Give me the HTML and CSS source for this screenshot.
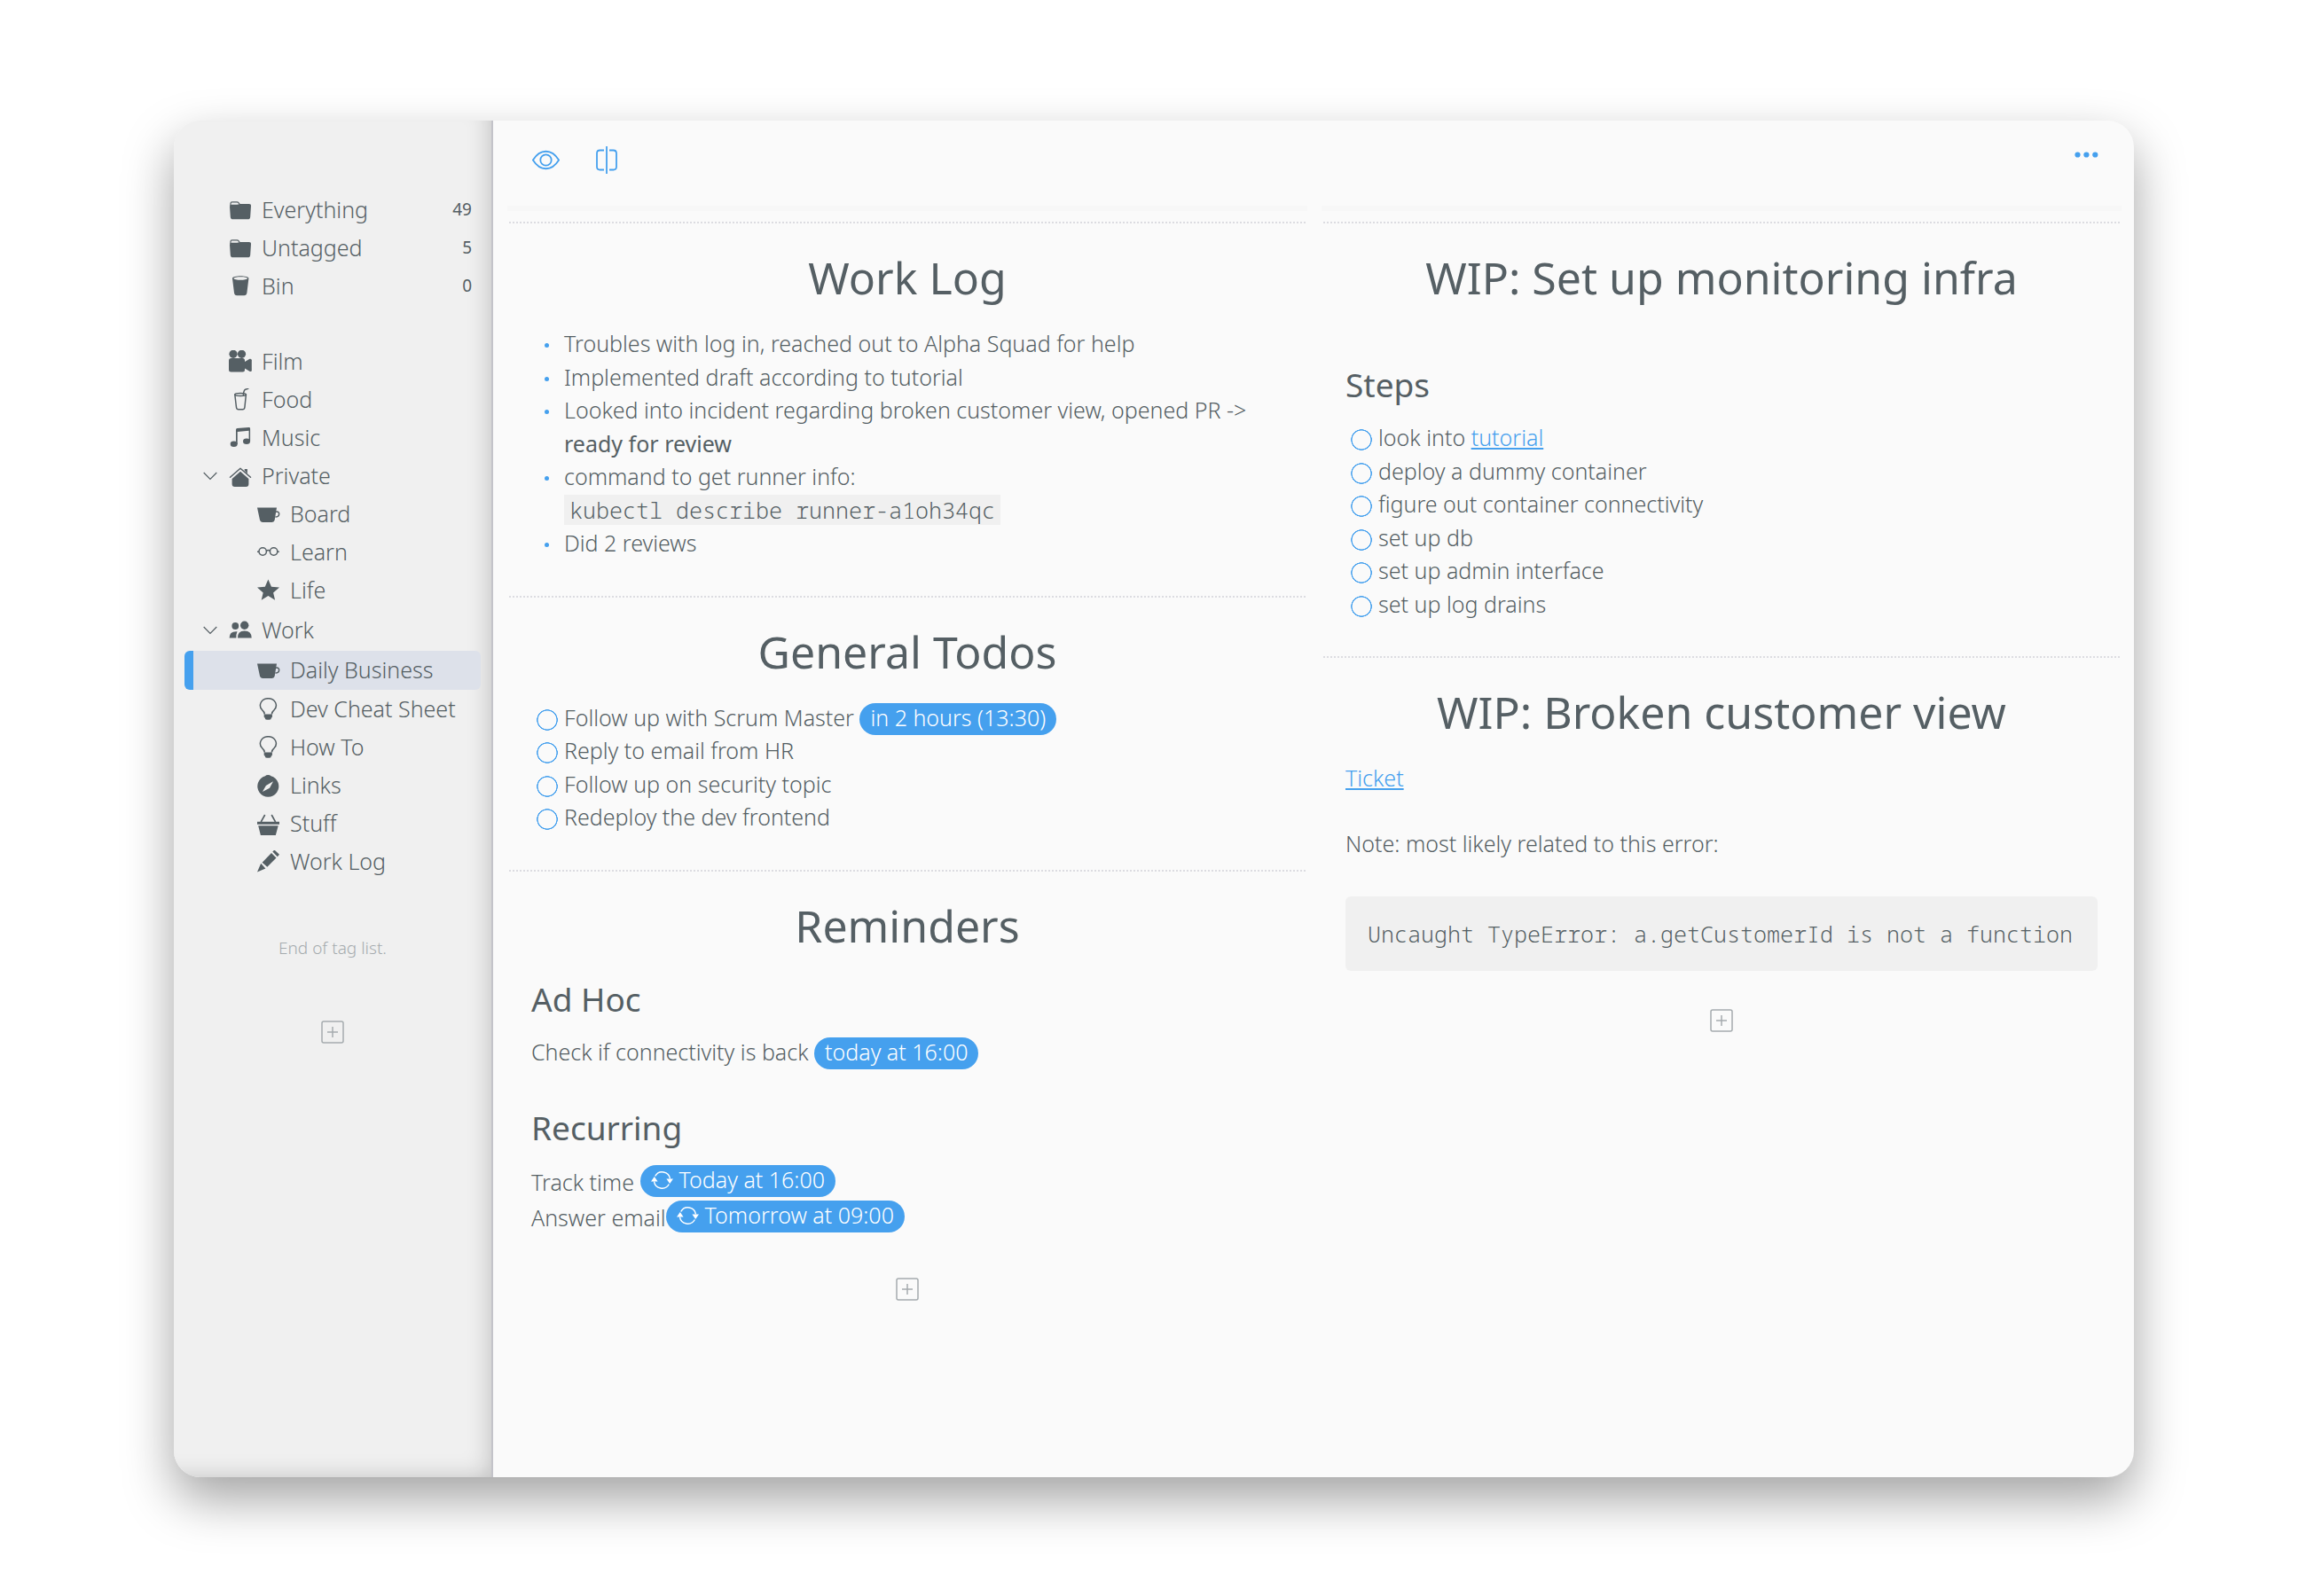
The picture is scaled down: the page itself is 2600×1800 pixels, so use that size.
FILE: index.html
```
<!DOCTYPE html>
<html lang="en">
<head>
<meta charset="utf-8">
<meta name="viewport" content="width=device-width, initial-scale=1">
<title>Daily Business</title>
<link rel="stylesheet" href="styles.css">
</head>
<body>
<svg class="sprite" aria-hidden="true">
  <symbol id="folder" viewBox="0 0 26 26"><path d="M2 8V5.500q0-1.700 1.700-1.700h5.600q1 0 1.600.8l1.200 1.600" fill="none" stroke="currentColor" stroke-width="1.200"/><path d="M1 9q0-2.200 2.200-2.200h6.300L12.500 6h10.300q2.400 0 2.200 2.400l-.8 12q-.2 2.900-2.800 2.900H4.800q-2.800 0-3-2.900z"/></symbol>
  <symbol id="bin" viewBox="0 0 26 26"><path fill-rule="evenodd" d="M4 4C4 .4 22.400.4 22.400 4l-2 16.200q-.4 3-3.200 3H9.200q-2.800 0-3.200-3zM5.500 4c0 2.400 15.400 2.400 15.400 0s-15.400-2-15.400 0z"/></symbol>
  <symbol id="film" viewBox="0 0 26 26"><circle cx="5" cy="4.300" r="4.600"/><circle cx="14.500" cy="4.300" r="4.600"/><rect y="9" width="18" height="15.500" rx="2.500"/><path d="M18 13l5.500-3.200q2.300-.6 2.300 1.400v11.500q0 1.700-2 1.200L18 20.500z"/></symbol>
  <symbol id="food" viewBox="0 0 26 26"><g fill="none" stroke="currentColor" stroke-width="1.500" stroke-linecap="round" stroke-linejoin="round"><path d="M6.800 7l1.700 14.500q.3 2.300 2.300 2.300h4.800q2 0 2.300-2.300L19.400 7"/><ellipse cx="13.100" cy="7" rx="6.300" ry="1.500"/><path d="M16.400 7.500q.3-5.500 2.300-6.200l3-1"/></g></symbol>
  <symbol id="music" viewBox="0 0 26 26"><ellipse cx="5.700" cy="19.700" rx="4" ry="3.300"/><ellipse cx="20" cy="16.800" rx="4" ry="3.200"/><path d="M8 3.800q0-1.500 1.500-1.700L22.500 1q1.600-.2 1.600 1.400V17h-1.500V4.800L9.700 6v14H8z"/></symbol>
  <symbol id="house" viewBox="0 0 26 26"><path d="M1.500 14.300L13 4.200l11.500 10.100" fill="none" stroke="currentColor" stroke-width="1.500" stroke-linecap="round" stroke-linejoin="round"/><path d="M17.700 6.500V5h3.200v5.500z"/><path d="M13 7.800l9.400 8.200v6q0 3-3 3H6.600q-3 0-3-3v-6z"/></symbol>
  <symbol id="cup" viewBox="0 0 26 26"><path d="M0 5.500h22L19.700 19.500q-.5 2.400-3 2.400H6q-2.500 0-3-2.400z"/><path d="M21 10.200c5-1 5 5.600-.6 5.900" fill="none" stroke="currentColor" stroke-width="1.500"/></symbol>
  <symbol id="glasses" viewBox="0 0 26 26"><g fill="none" stroke="currentColor" stroke-width="1.500"><circle cx="6.200" cy="12" r="4.200"/><circle cx="18.600" cy="12" r="4.200"/><path d="M10.300 11.500q2.100-2 4.200 0M0 12.300h2M22.800 12.300h2"/></g></symbol>
  <symbol id="star" viewBox="0 0 26 26"><path d="M12.400.6L16 8.800l9 .7-6.900 5.900 2 8.300-7.700-4.600-7.700 4.600 2-8.300L0 9.500l8.800-.7z"/></symbol>
  <symbol id="people" viewBox="0 0 26 26"><circle cx="17.700" cy="7.200" r="4.700"/><circle cx="7.300" cy="8" r="3.900"/><path d="M10 21.600q-.3-8 7.700-8t8 8zM.6 21.600Q.6 13.500 9.500 14.200 8.200 17 8.400 21.600z"/></symbol>
  <symbol id="bulb" viewBox="0 0 26 26"><path d="M8.300 18.500Q8.300 16 5.500 13.600C.8 8.500 4.600.7 12.400.7S24 8.500 19.200 13.600Q16.400 16 16.400 18.500" fill="none" stroke="currentColor" stroke-width="1.500"/><path d="M7.700 18.500h9.200v3.300q-.3.500-1 .7 0 2.300-2.100 2.300h-3q-2.100 0-2.100-2.300-.7-.2-1-.7z"/></symbol>
  <symbol id="compass" viewBox="0 0 26 26"><path fill-rule="evenodd" d="M9 2.200q1-1.200 3.200-1.200t3.400 1.200A12 12 0 1 1 9 2.200zM18 8.300l-8.100 4.600-4 7.200 8.100-4.400z"/></symbol>
  <symbol id="basket" viewBox="0 0 26 26"><path d="M8.700 3L4.200 11M16.200 3l4.400 8" fill="none" stroke="currentColor" stroke-width="1.600"/><path d="M0 10.700h25v3H0zM1.200 15.200h22.500l-3 11.300H4z"/></symbol>
  <symbol id="pencil" viewBox="0 0 26 26"><path d="M17.300 1.500L19.400-.5l5.600 5.200-2.200 2.500zM16 3l5.500 5.500-10.200 10.300-5.700-5zM4.200 14.800l5.200 5.600L0 24.600z"/></symbol>
  <symbol id="chevron" viewBox="0 0 16 16"><path d="M.7 4L8 11.500 15.300 4" fill="none" stroke="currentColor" stroke-width="1.200"/></symbol>
  <symbol id="plus" viewBox="0 0 26 26"><rect x="1" y="1" width="24" height="24" rx="2" fill="none" stroke="currentColor" stroke-width="1.500"/><path d="M13 7v12M7 13h12" fill="none" stroke="currentColor" stroke-width="1.500"/></symbol>
  <symbol id="eye" viewBox="0 0 32 32"><g fill="none" stroke="currentColor" stroke-width="1.800" stroke-linejoin="round"><path d="M.9 16.500C9 3.500 22 3.500 30.100 16.500 22 29.500 9 29.500.9 16.500z"/><circle cx="15.500" cy="16.500" r="6.200"/></g></symbol>
  <symbol id="split" viewBox="0 0 32 32"><path d="M16 1v31M13 5.500H8.500q-3.500 0-3.500 3.500v15q0 3.500 3.500 3.500H13M19 5.500h4.500q3.500 0 3.500 3.500v15q0 3.500-3.500 3.500H19" fill="none" stroke="currentColor" stroke-width="1.800"/></symbol>
  <symbol id="dots" viewBox="0 0 27 21"><circle cx="3.500" cy="10.500" r="3.100"/><circle cx="13.400" cy="10.500" r="3.100"/><circle cx="23.300" cy="10.500" r="3.100"/></symbol>
  <symbol id="repeat" viewBox="0 0 26 26"><path d="M4.700 8.500a9 9 0 0 1 16.800 3M20.300 17.500a9 9 0 0 1-16.800-3" fill="none" stroke="currentColor" stroke-width="1.500"/><path d="M0 14.500h7.600L3.800 9zM17.400 11.500H25l-3.800 5.500z"/></symbol>
</svg>

<div class="window">
  <nav class="sidebar" aria-label="Tags">
    <ul class="tags">
      <li><div class="row"><a class="tag" href="#everything"><svg class="icon"><use href="#folder"/></svg>Everything<span class="count">49</span></a></div></li>
      <li><div class="row"><a class="tag" href="#untagged"><svg class="icon"><use href="#folder"/></svg>Untagged<span class="count">5</span></a></div></li>
      <li><div class="row"><a class="tag" href="#bin-notes"><svg class="icon"><use href="#bin"/></svg>Bin<span class="count">0</span></a></div></li>
    </ul>
    <ul class="tags">
      <li><div class="row"><a class="tag" href="#t-film"><svg class="icon"><use href="#film"/></svg>Film</a></div></li>
      <li><div class="row"><a class="tag" href="#t-food"><svg class="icon"><use href="#food"/></svg>Food</a></div></li>
      <li><div class="row"><a class="tag" href="#t-music"><svg class="icon"><use href="#music"/></svg>Music</a></div></li>
      <li>
        <div class="row"><button class="toggle" aria-label="Collapse Private" aria-expanded="true"><svg><use href="#chevron"/></svg></button><a class="tag" href="#t-private"><svg class="icon"><use href="#house"/></svg>Private</a></div>
        <ul class="children">
          <li><div class="row"><a class="tag" href="#t-board"><svg class="icon"><use href="#cup"/></svg>Board</a></div></li>
          <li><div class="row"><a class="tag" href="#t-learn"><svg class="icon"><use href="#glasses"/></svg>Learn</a></div></li>
          <li><div class="row"><a class="tag" href="#t-life"><svg class="icon"><use href="#star"/></svg>Life</a></div></li>
        </ul>
      </li>
      <li>
        <div class="row"><button class="toggle" aria-label="Collapse Work" aria-expanded="true"><svg><use href="#chevron"/></svg></button><a class="tag" href="#t-work"><svg class="icon"><use href="#people"/></svg>Work</a></div>
        <ul class="children">
          <li><div class="row active"><a class="tag" href="#t-daily" aria-current="page"><svg class="icon"><use href="#cup"/></svg>Daily Business</a></div></li>
          <li><div class="row"><a class="tag" href="#t-dev"><svg class="icon"><use href="#bulb"/></svg>Dev Cheat Sheet</a></div></li>
          <li><div class="row"><a class="tag" href="#t-howto"><svg class="icon"><use href="#bulb"/></svg>How To</a></div></li>
          <li><div class="row"><a class="tag" href="#t-links"><svg class="icon"><use href="#compass"/></svg>Links</a></div></li>
          <li><div class="row"><a class="tag" href="#t-stuff"><svg class="icon"><use href="#basket"/></svg>Stuff</a></div></li>
          <li><div class="row"><a class="tag" href="#t-worklog"><svg class="icon"><use href="#pencil"/></svg>Work Log</a></div></li>
        </ul>
      </li>
    </ul>
    <p class="end">End of tag list.</p>
    <button class="add" aria-label="Add tag"><svg><use href="#plus"/></svg></button>
  </nav>

  <main class="main">
    <header class="toolbar">
      <button class="tool" aria-label="Preview"><svg class="tool-icon"><use href="#eye"/></svg></button>
      <button class="tool" aria-label="Split view"><svg class="tool-icon"><use href="#split"/></svg></button>
      <button class="tool more" aria-label="More"><svg class="more-icon"><use href="#dots"/></svg></button>
    </header>
    <div class="board">
      <div class="column">
        <article class="note">
          <h2>Work Log</h2>
          <ul class="bullets">
            <li><div>Troubles with log in, reached out to Alpha Squad for help</div></li>
            <li><div>Implemented draft according to tutorial</div></li>
            <li><div>Looked into incident regarding broken customer view, opened PR -&gt; <strong>ready for review</strong></div></li>
            <li><div>command to get runner info:<br><code>kubectl describe runner-a1oh34qc</code></div></li>
            <li><div>Did 2 reviews</div></li>
          </ul>
        </article>
        <article class="note">
          <h2>General Todos</h2>
          <ul class="todos">
            <li><input type="checkbox" id="g1"><label for="g1">Follow up with Scrum Master <span class="pill">in 2 hours (13:30)</span></label></li>
            <li><input type="checkbox" id="g2"><label for="g2">Reply to email from HR</label></li>
            <li><input type="checkbox" id="g3"><label for="g3">Follow up on security topic</label></li>
            <li><input type="checkbox" id="g4"><label for="g4">Redeploy the dev frontend</label></li>
          </ul>
        </article>
        <article class="note last">
          <h2>Reminders</h2>
          <h3>Ad Hoc</h3>
          <p>Check if connectivity is back <span class="pill">today at 16:00</span></p>
          <h3 class="spaced">Recurring</h3>
          <div class="recurring">
            <p>Track time <span class="pill repeat"><svg><use href="#repeat"/></svg>Today at 16:00</span></p>
            <p>Answer email<span class="pill repeat"><svg><use href="#repeat"/></svg>Tomorrow at 09:00</span></p>
          </div>
        </article>
        <button class="add" aria-label="Add note"><svg><use href="#plus"/></svg></button>
      </div>
      <div class="column">
        <article class="note">
          <h2>WIP: Set up monitoring infra</h2>
          <h3 class="after-blank">Steps</h3>
          <ul class="todos">
            <li><input type="checkbox" id="s1"><label for="s1">look into <a class="link" href="#tutorial">tutorial</a></label></li>
            <li><input type="checkbox" id="s2"><label for="s2">deploy a dummy container</label></li>
            <li><input type="checkbox" id="s3"><label for="s3">figure out container connectivity</label></li>
            <li><input type="checkbox" id="s4"><label for="s4">set up db</label></li>
            <li><input type="checkbox" id="s5"><label for="s5">set up admin interface</label></li>
            <li><input type="checkbox" id="s6"><label for="s6">set up log drains</label></li>
          </ul>
        </article>
        <article class="note last">
          <h2>WIP: Broken customer view</h2>
          <div class="paragraphs">
            <p><a class="link" href="#ticket">Ticket</a></p>
            <p>Note: most likely related to this error:</p>
            <pre class="block"><code>Uncaught TypeError: a.getCustomerId is not a function</code></pre>
          </div>
        </article>
        <button class="add" aria-label="Add note"><svg><use href="#plus"/></svg></button>
      </div>
    </div>
  </main>
</div>
</body>
</html>
```
FILE: styles.css
```
:root {
  --text: #555f64;
  --accent: #45a0ee;
  --muted: #a5abae;
  --panel: #f0f0f0;
}

* {
  box-sizing: border-box;
}

body {
  margin: 0;
  min-height: 100vh;
  padding: 136px 194px 134px 196px;
  display: flex;
  background: #fff;
  color: var(--text);
  font-family: "Noto Sans", "Open Sans", sans-serif;
  font-size: 25px;
  font-weight: 300;
  line-height: 1.5;
}

h2, h3, p, ul, pre {
  margin: 0;
  padding: 0;
}

ul {
  list-style: none;
}

svg {
  display: block;
  fill: currentColor;
  overflow: visible;
}

.sprite {
  position: absolute;
  width: 0;
  height: 0;
}

button {
  padding: 0;
  border: 0;
  background: none;
  color: inherit;
  cursor: pointer;
}

.window {
  flex: 1;
  min-width: 0;
  display: flex;
  border-radius: 30px;
  overflow: hidden;
  background: #fafafa;
  box-shadow: 0 25px 56px rgba(0, 0, 0, .36);
}

/* Sidebar */

.sidebar {
  flex: none;
  width: 360px;
  padding: 79px 12px 40px;
  display: flex;
  flex-direction: column;
  background: var(--panel);
  border-right: 2px solid #c3c3c9;
  box-shadow: inset -14px -12px 28px -14px rgba(0, 0, 0, .22);
}

.tags + .tags {
  margin-top: 42px;
}

.row {
  display: flex;
  align-items: center;
  height: 43px;
  padding: 0 10px 0 50px;
  border-radius: 6px;
}

.row.active {
  height: 44px;
  margin-top: 2px;
  border-left: 10px solid var(--accent);
  background: #dde1ea;
}

.toggle {
  width: 16px;
  margin: 0 13px 0 -29px;
}

.toggle svg {
  width: 16px;
  height: 16px;
}

.tag {
  flex: 1;
  display: flex;
  align-items: center;
  gap: 11px;
  color: inherit;
  text-decoration: none;
  white-space: nowrap;
}

.icon {
  flex: none;
  width: 26px;
  height: 26px;
}

.count {
  margin-left: auto;
  font-size: 19px;
  font-weight: 400;
}

.children {
  padding-bottom: 2px;
}

.children .row {
  padding-left: 82px;
}

.children .row.active {
  padding-left: 72px;
}

.end {
  margin-top: 60px;
  color: var(--muted);
  font-size: 19px;
  line-height: 28px;
  text-align: center;
}

.add {
  display: block;
  margin: 0 auto;
  color: var(--muted);
}

.add svg {
  width: 26px;
  height: 26px;
}

.sidebar .add {
  margin-top: 68px;
}

/* Main area */

.main {
  flex: 1;
  min-width: 0;
}

.toolbar {
  display: flex;
  align-items: flex-start;
  gap: 36px;
  height: 96px;
  padding: 28px 40px 0 44px;
  color: var(--accent);
}

.tool-icon {
  width: 32px;
  height: 32px;
}

.more {
  margin-left: auto;
}

.more-icon {
  width: 27px;
  height: 21px;
}

.board {
  display: grid;
  grid-template-columns: repeat(2, minmax(0, 1fr));
  gap: 16px;
  padding: 0 14px 40px 16px;
}

.column::before {
  content: "";
  display: block;
  height: 6px;
  margin-bottom: 12px;
  background: #f7f7f7;
}

.column > .add {
  margin-top: 43px;
}

.note {
  margin: 0 2px;
  padding: 26px 25px 40px;
  border-top: 2px dotted #dcdce1;
}

.note.last {
  padding-bottom: 0;
}

h2 {
  margin-bottom: 21px;
  font-size: 50px;
  font-weight: 400;
  line-height: 70px;
  text-align: center;
}

h3 {
  margin: 22px 0 15px;
  font-size: 37px;
  font-weight: 400;
  line-height: 52px;
}

h3.spaced {
  margin-top: 41px;
}

h3.after-blank {
  margin-top: 60px;
}

strong {
  font-weight: 400;
}

.bullets li,
.todos li {
  display: grid;
  grid-template-columns: 37px minmax(0, 1fr);
}

.bullets li::before {
  content: "";
  width: 5px;
  height: 5px;
  margin: 18px 0 0 15px;
  border-radius: 50%;
  background: var(--accent);
}

.todos input {
  appearance: none;
  width: 24px;
  height: 24px;
  margin: 9px 0 0 6px;
  border-radius: 50%;
  background: radial-gradient(circle closest-side, transparent 84%, var(--accent) 90%, var(--accent) 97%, transparent 100%);
}

.todos input:checked {
  background: var(--accent);
}

code {
  font-family: "Noto Sans Mono", "DejaVu Sans Mono", monospace;
  font-size: 25px;
}

.bullets code {
  padding: 0 6px;
  background: var(--panel);
}

.pill {
  display: inline-block;
  margin-bottom: -2px;
  padding: 0 12px 4px;
  border-radius: 18px;
  background: var(--accent);
  color: #fff;
  line-height: 32px;
}

.recurring {
  padding-bottom: 5px;
  line-height: 40px;
}

.pill.repeat {
  vertical-align: 3px;
}

.repeat svg {
  display: inline-block;
  width: 26px;
  height: 26px;
  margin-right: 6px;
  vertical-align: -4px;
}

.link {
  color: var(--accent);
  text-decoration-thickness: 2px;
  text-underline-offset: 2px;
  text-decoration-skip-ink: none;
}

.paragraphs {
  display: grid;
  gap: 36px;
}

.block {
  margin-top: 5px;
  padding: 24px 25px;
  border-radius: 6px;
  background: var(--panel);
  font-family: "Noto Sans Mono", "DejaVu Sans Mono", monospace;
  font-size: 25px;
  line-height: 36px;
  overflow: hidden;
}
```
